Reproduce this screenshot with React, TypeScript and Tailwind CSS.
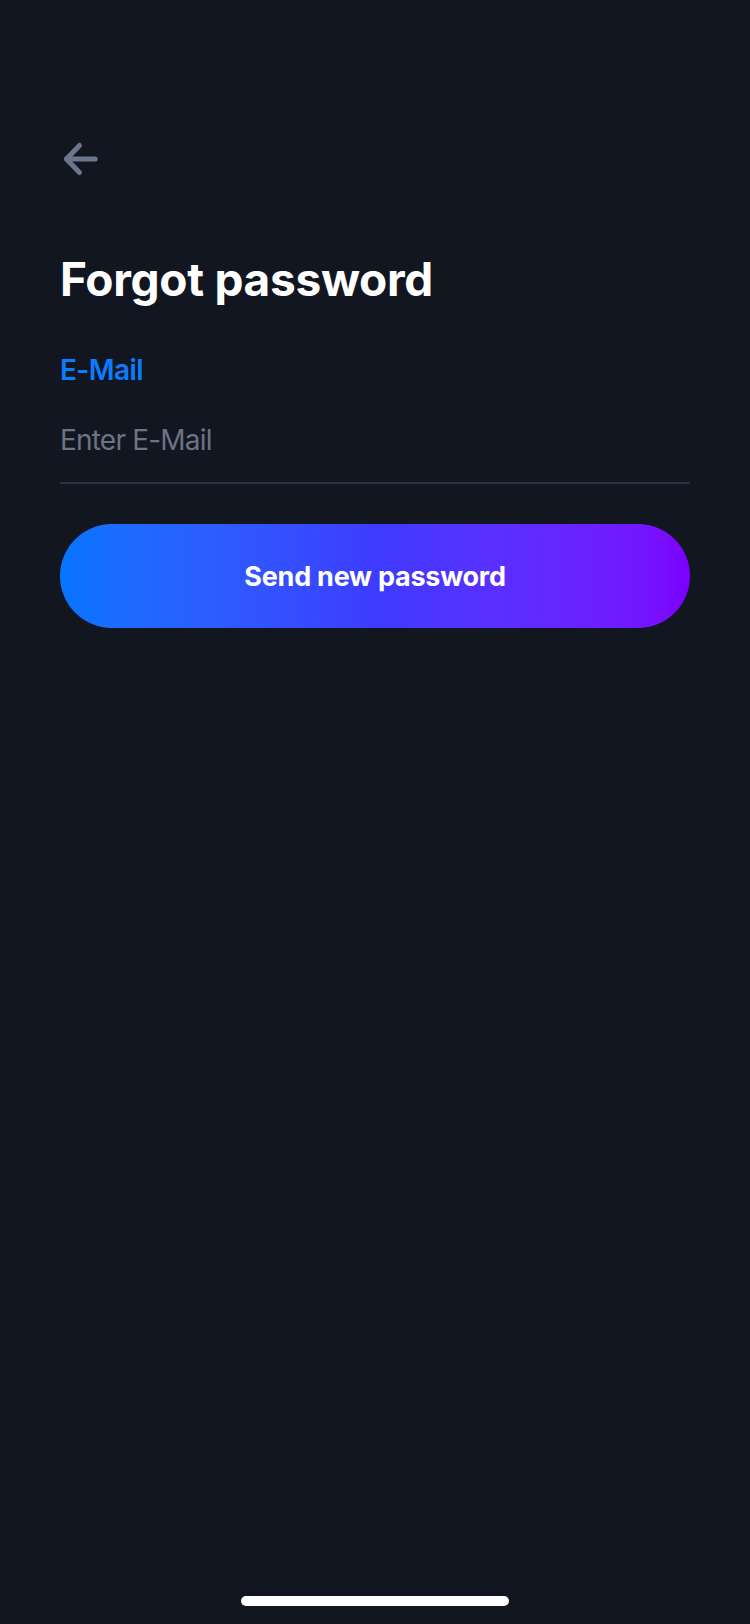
import { useState } from "react";

function BackArrow() {
  return (
    <svg
      aria-hidden="true"
      className="h-[40px] w-[40px] text-[#6b768c]"
      fill="none"
      stroke="currentColor"
      strokeLinecap="round"
      strokeLinejoin="round"
      strokeWidth={5}
      viewBox="0 0 40 40"
    >
      <path d="M35.2 19H6.5" />
      <path d="M19.5 5.5 6.5 19l13 13.5" />
    </svg>
  );
}

export default function App() {
  const [email, setEmail] = useState("");

  return (
    <div
      className="flex min-h-[1624px] w-full flex-col bg-[#121620] px-[60px]"
      style={{ fontFamily: "Inter, 'Noto Sans', sans-serif" }}
    >
      <button className="mt-[140px] w-fit" type="button" aria-label="Back">
        <BackArrow />
      </button>

      <h1 className="mt-[76px] text-[46px] font-bold leading-none tracking-[-0.3px] text-white">
        Forgot password
      </h1>

      <label
        className="mt-[54px] text-[28px] font-semibold leading-none tracking-[-0.6px] text-[#0a7cff]"
        htmlFor="email"
      >
        E-Mail
      </label>
      <input
        className="mt-[14px] h-[86px] w-full border-b-2 border-[#2c313d] bg-transparent text-[28px] tracking-[-0.8px] text-white outline-none placeholder:text-[#6b7385]"
        id="email"
        onChange={(event) => setEmail(event.target.value)}
        placeholder="Enter E-Mail"
        type="email"
        value={email}
      />

      <button
        className="mt-[40px] flex h-[104px] w-full items-center justify-center rounded-full bg-linear-to-r from-[#0575ff] via-[#3d3bff] to-[#7b00ff] text-[27px] font-bold leading-none tracking-[-0.25px] text-white"
        type="button"
      >
        Send new password
      </button>

      <div className="flex-1" />
      <div className="mx-auto mb-[18px] h-[10px] w-[268px] rounded-full bg-white" />
    </div>
  );
}
